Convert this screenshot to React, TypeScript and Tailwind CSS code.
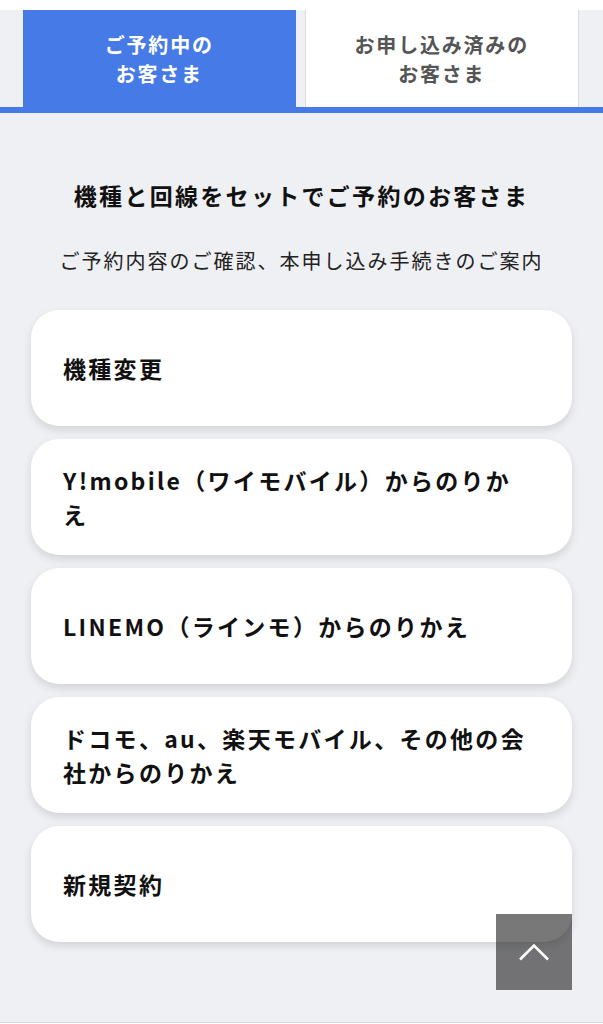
const cards = [
  '機種変更',
  'Y!mobile（ワイモバイル）からのりかえ',
  'LINEMO（ラインモ）からのりかえ',
  'ドコモ、au、楽天モバイル、その他の会社からのりかえ',
  '新規契約',
]

export default function App() {
  return (
    <div className="min-h-screen bg-white font-['Noto_Sans_CJK_JP','Noto_Sans',sans-serif]">
      {/* tabs */}
      <div className="pt-[10px]">
        <div className="bg-[#eff0f4]">
          <div className="flex h-[97px] gap-[9px] pl-[23px] pr-[24px]">
            <div className="flex flex-1 items-center justify-center bg-[#467ae6] text-center text-[20px] font-bold leading-[29px] tracking-[0.09em] text-white">
              <p>
                ご予約中の
                <br />
                お客さま
              </p>
            </div>
            <div className="flex flex-1 items-center justify-center border-x border-[#dcdde2] bg-white text-center text-[20px] font-bold leading-[29px] tracking-[0.09em] text-[#555]">
              <p>
                お申し込み済みの
                <br />
                お客さま
              </p>
            </div>
          </div>
          <div className="h-[6px] bg-[#467ae6]" />
        </div>
      </div>

      {/* content */}
      <main className="border-b border-[#d6d7dc] bg-[#eff0f4] px-[31px] pb-[80px] pt-[65px]">
        <h1 className="text-center text-[23px] font-bold leading-[34px] tracking-[0.1em] text-[#111]">
          機種と回線をセットでご予約のお客さま
        </h1>
        <p className="mt-[34px] text-center text-[20px] leading-[30px] tracking-[0.1em] text-[#222]">
          ご予約内容のご確認、本申し込み手続きのご案内
        </p>

        <ul className="mt-[34px] flex flex-col gap-[13px]">
          {cards.map((c) => (
            <li
              key={c}
              className="flex min-h-[116px] items-center rounded-[28px] bg-white pl-[32px] pr-[40px] shadow-[0_4px_9px_rgba(0,0,0,0.12)]"
            >
              <span className="text-[23px] font-bold leading-[34px] tracking-[0.1em] text-[#111]">{c}</span>
            </li>
          ))}
        </ul>
      </main>

      {/* back to top */}
      <button className="fixed bottom-[34px] right-[31px] flex h-[76px] w-[76px] items-center justify-center bg-[rgba(30,30,30,0.6)]">
        <svg width="32" height="18" viewBox="0 0 32 18" fill="none">
          <path d="M2 16.5L16 2.5L30 16.5" stroke="white" strokeWidth="2.6" />
        </svg>
      </button>
    </div>
  )
}
